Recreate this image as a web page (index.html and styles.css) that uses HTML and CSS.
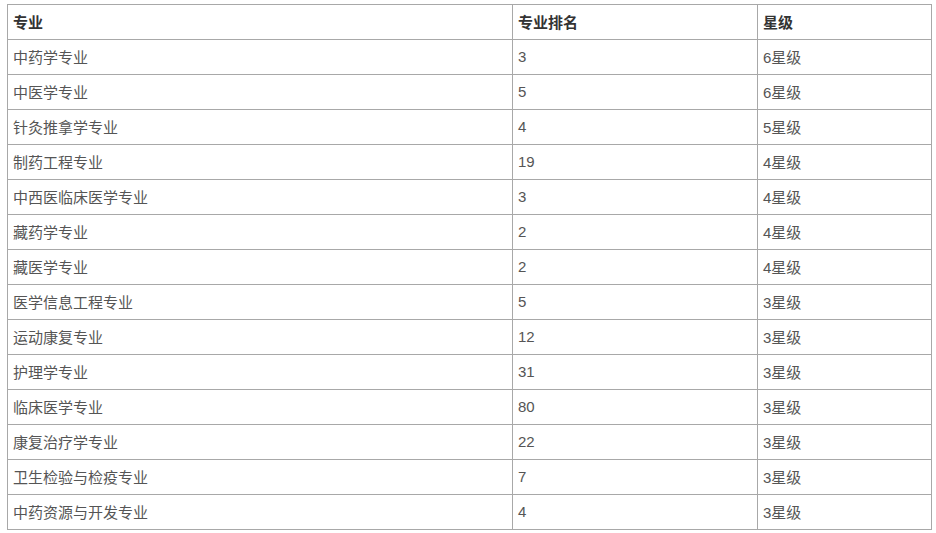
FILE: index.html
```html
<!DOCTYPE html>
<html lang="zh">
<head>
<meta charset="utf-8">
<link rel="stylesheet" href="styles.css">
</head>
<body>
<div class="wrap">
<table class="rank">
<colgroup><col class="c1"><col class="c2"><col class="c3"></colgroup>
<thead>
<tr><th>专业</th><th>专业排名</th><th>星级</th></tr>
</thead>
<tbody>
<tr><td>中药学专业</td><td>3</td><td>6星级</td></tr>
<tr><td>中医学专业</td><td>5</td><td>6星级</td></tr>
<tr><td>针灸推拿学专业</td><td>4</td><td>5星级</td></tr>
<tr><td>制药工程专业</td><td>19</td><td>4星级</td></tr>
<tr><td>中西医临床医学专业</td><td>3</td><td>4星级</td></tr>
<tr><td>藏药学专业</td><td>2</td><td>4星级</td></tr>
<tr><td>藏医学专业</td><td>2</td><td>4星级</td></tr>
<tr><td>医学信息工程专业</td><td>5</td><td>3星级</td></tr>
<tr><td>运动康复专业</td><td>12</td><td>3星级</td></tr>
<tr><td>护理学专业</td><td>31</td><td>3星级</td></tr>
<tr><td>临床医学专业</td><td>80</td><td>3星级</td></tr>
<tr><td>康复治疗学专业</td><td>22</td><td>3星级</td></tr>
<tr><td>卫生检验与检疫专业</td><td>7</td><td>3星级</td></tr>
<tr><td>中药资源与开发专业</td><td>4</td><td>3星级</td></tr>
</tbody>
</table>
</div>
</body>
</html>
```
FILE: styles.css
```css
html, body { margin: 0; padding: 0; background: #fff; }
.wrap { padding: 4px 5px 0 7px; }
.rank {
  border-collapse: collapse;
  width: 924px;
  table-layout: fixed;
  font-family: "Liberation Sans", "Noto Sans CJK SC", sans-serif;
  font-size: 15px;
  color: #555;
}
.c1 { width: 505px; }
.c2 { width: 245px; }
.c3 { width: 174px; }
.rank tr { height: 35px; }
.rank th, .rank td {
  border: 1px solid #a8a8a8;
  padding: 0 5px 2px;
  text-align: left;
  vertical-align: middle;
}
.rank th { font-weight: bold; color: #333; }
```
